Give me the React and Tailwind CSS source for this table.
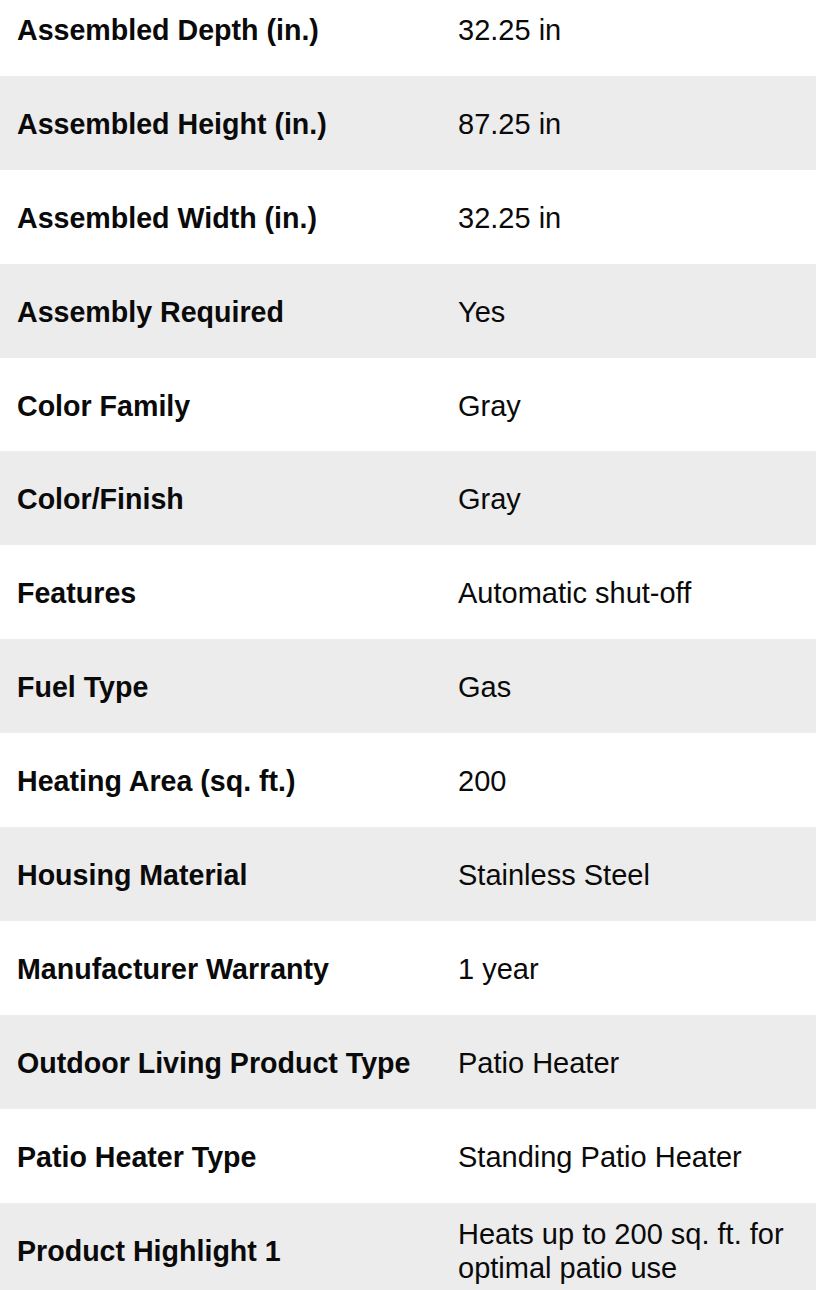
import React from 'react';

const specs = [
  ['Assembled Depth (in.)', '32.25 in'],
  ['Assembled Height (in.)', '87.25 in'],
  ['Assembled Width (in.)', '32.25 in'],
  ['Assembly Required', 'Yes'],
  ['Color Family', 'Gray'],
  ['Color/Finish', 'Gray'],
  ['Features', 'Automatic shut-off'],
  ['Fuel Type', 'Gas'],
  ['Heating Area (sq. ft.)', '200'],
  ['Housing Material', 'Stainless Steel'],
  ['Manufacturer Warranty', '1 year'],
  ['Outdoor Living Product Type', 'Patio Heater'],
  ['Patio Heater Type', 'Standing Patio Heater'],
  ['Product Highlight 1', 'Heats up to 200 sq. ft. for optimal patio use'],
];

export default function App() {
  return (
    <div
      className="w-[816px] h-[1290px] overflow-hidden bg-white text-[#0a0a0a]"
      style={{ fontFamily: '"Liberation Sans", Arial, sans-serif' }}
    >
      <div className="-mt-[18px]">
        {specs.map(([label, value], i) => (
          <div
            key={label}
            className={
              'grid grid-cols-[441px_1fr] items-center min-h-[93.9px] pt-[2px] ' +
              (i % 2 === 1 ? 'bg-[#ececec]' : 'bg-white')
            }
          >
            <div className="pl-[17px] pr-3 text-[28.6px] font-bold leading-[34px]">{label}</div>
            <div className="pl-[17px] pr-4 text-[29px] leading-[34px] py-[12px]">{value}</div>
          </div>
        ))}
      </div>
    </div>
  );
}
